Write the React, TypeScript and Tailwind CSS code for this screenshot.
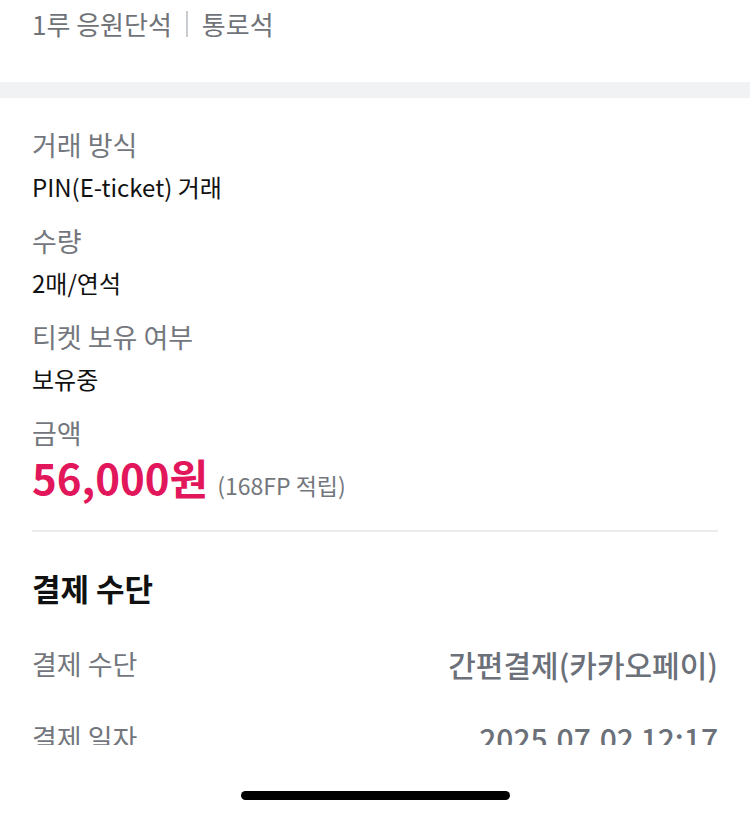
import React from 'react';

const font = { fontFamily: '"Noto Sans CJK KR", "Noto Sans", sans-serif' };

type Item = { label: string; value: string };

const items: Item[] = [
  { label: '거래 방식', value: 'PIN(E-ticket) 거래' },
  { label: '수량', value: '2매/연석' },
  { label: '티켓 보유 여부', value: '보유중' },
];

export default function App() {
  return (
    <div className="w-[750px] h-[816px] bg-white flex flex-col overflow-hidden" style={font}>
      {/* scroll area */}
      <div className="h-[745px] shrink-0 overflow-hidden">
        <div className="px-8 pt-[4px] h-[82px]">
          <div className="flex items-center text-[26px] leading-[40px] text-[#6f7378]">
            <span>1루 응원단석</span>
            <span className="mx-[14px] w-[2px] h-[26px] bg-[#c9ccd0]"></span>
            <span>통로석</span>
          </div>
        </div>
        <div className="h-[16px] bg-[#f1f2f4]"></div>

        <div className="px-8 pt-[29px]">
          {items.map((item) => (
            <div key={item.label} className="mb-[20px]">
              <div className="text-[27px] leading-[36px] text-[#73777d]">{item.label}</div>
              <div className="mt-[8px] text-[24px] leading-[32px] text-[#111]">{item.value}</div>
            </div>
          ))}
          <div>
            <div className="text-[27px] leading-[36px] text-[#73777d]">금액</div>
            <div className="mt-[4px] flex items-baseline">
              <span className="text-[42px] leading-[44px] font-bold text-[#e2165b]">56,000원</span>
              <span className="ml-[9px] text-[23px] text-[#73777d]">(168FP 적립)</span>
            </div>
          </div>

          <div className="mt-[27px] h-[2px] bg-[#ececec]"></div>

          <div className="mt-[36px] text-[31px] leading-[40px] font-bold text-[#111]">결제 수단</div>

          <div className="mt-[38px] flex justify-between items-center">
            <span className="text-[27px] leading-[36px] text-[#73777d]">결제 수단</span>
            <span className="text-[30px] leading-[36px] font-medium text-[#6b7079]">간편결제(카카오페이)</span>
          </div>
          <div className="mt-[38px] flex justify-between items-center">
            <span className="text-[27px] leading-[36px] text-[#73777d]">결제 일자</span>
            <span className="text-[30px] leading-[36px] font-medium text-[#6b7079]">2025.07.02 12:17</span>
          </div>
        </div>
      </div>

      {/* home indicator */}
      <div className="flex-1 flex justify-center pt-[46px]">
        <div className="w-[269px] h-[9px] rounded-full bg-black"></div>
      </div>
    </div>
  );
}
